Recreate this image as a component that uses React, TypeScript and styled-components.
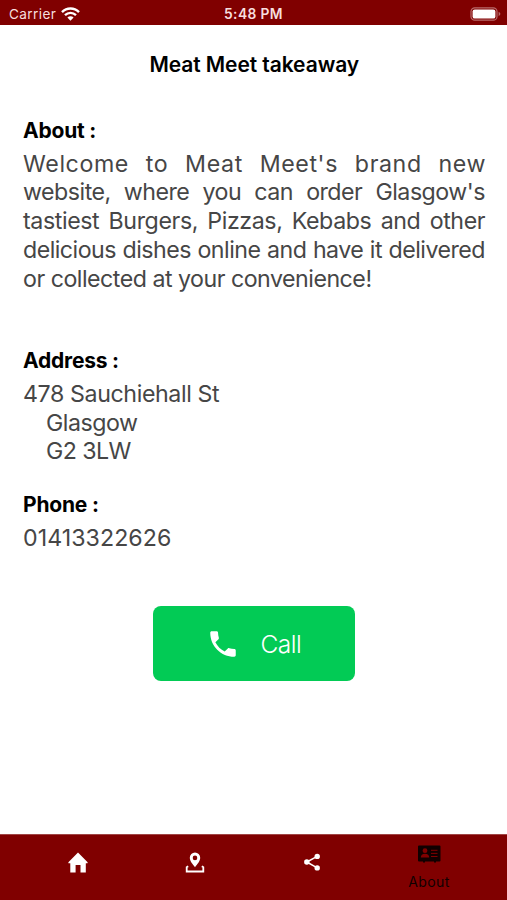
import React from "react";
import styled, { createGlobalStyle } from "styled-components";

const Global = createGlobalStyle`
  * { box-sizing: border-box; }
  body { margin: 0; background: #fff; }
`;

const Screen = styled.div`
  width: 507px;
  height: 900px;
  display: flex;
  flex-direction: column;
  overflow: hidden;
  background: #fff;
  font-family: Inter, "Liberation Sans", sans-serif;
`;

const StatusBar = styled.header`
  height: 25px;
  flex: none;
  display: grid;
  grid-template-columns: 1fr auto 1fr;
  align-items: center;
  padding: 2px 6px 0 9px;
  background: #800000;
  color: #f6dede;
  font-size: 13.6px;
  line-height: 16px;
`;

const Carrier = styled.div`
  display: flex;
  align-items: center;
  gap: 5px;
  letter-spacing: 0.4px;
`;

const Clock = styled.div`
  font-size: 13.8px;
  font-weight: 600;
  letter-spacing: 0.4px;
  margin-right: 3px;
`;

const BatterySlot = styled.div`
  display: flex;
  justify-content: flex-end;
`;

const Main = styled.main`
  flex: 1;
  display: flex;
  flex-direction: column;
  padding: 27px 21.5px 0 23px;
`;

const Title = styled.h1`
  margin: 0 0 39.6px;
  text-align: center;
  font-size: 21px;
  font-weight: 600;
  line-height: 26px;
  letter-spacing: -0.08px;
  white-space: nowrap;
  color: #000;
`;

const Section = styled.section<{ $after: number }>`
  margin-bottom: ${(p) => p.$after}px;
`;

const Heading = styled.h2`
  margin: 0 0 6.2px;
  font-size: 21px;
  font-weight: 700;
  line-height: 26px;
  letter-spacing: -0.2px;
  color: #000;
`;

const Line = styled.div<{ $spacing: number; $justify?: boolean; $indent?: number }>`
  font-size: 23.2px;
  line-height: 28.7px;
  white-space: nowrap;
  color: #464646;
  letter-spacing: ${(p) => p.$spacing}px;
  margin-right: ${(p) => -p.$spacing}px;
  padding-left: ${(p) => p.$indent ?? 0}px;
  text-align-last: ${(p) => (p.$justify ? "justify" : "left")};
`;

const CallButton = styled.button`
  align-self: center;
  width: 202px;
  height: 75px;
  display: flex;
  align-items: center;
  padding: 0 0 0 53px;
  gap: 21px;
  border: 0;
  border-radius: 8px;
  background: #02cb55;
  color: #fff;
  font-family: inherit;
  font-size: 24.5px;
  font-weight: 300;
  letter-spacing: -0.5px;
  margin-right: 1.5px;
`;

const TabBar = styled.nav`
  flex: none;
  height: 66px;
  display: grid;
  grid-template-columns: 117px 117px 117px 117px;
  justify-content: center;
  background: #800000;
  border-top: 1px solid #a04545;
`;

const Tab = styled.div<{ $active?: boolean }>`
  display: flex;
  flex-direction: column;
  align-items: center;
  padding-top: ${(p) => (p.$active ? 8 : 16)}px;
  gap: 8px;
  color: ${(p) => (p.$active ? "#100000" : "#fff")};
  font-size: 14px;
  line-height: 18px;
  letter-spacing: 0.4px;
`;

const about: [string, number][] = [
  ["Welcome to Meat Meet's brand new", 0.6],
  ["website, where you can order Glasgow's", -0.5],
  ["tastiest Burgers, Pizzas, Kebabs and other", -0.4],
  ["delicious dishes online and have it delivered", -0.52],
];

export default function App() {
  return (
    <Screen>
      <Global />
      <StatusBar>
        <Carrier>
          <span>Carrier</span>
          <svg width="19" height="14" viewBox="0 0 19 14" fill="none" stroke="#fff" strokeWidth="2.4">
            <path d="M1 5.1C5.8.2 13.2.2 18 5.1" />
            <path d="M4 8.2c3.2-3.1 7.8-3.1 11 0" />
            <path d="M6.4 10.6c1.8-1.7 4.4-1.7 6.2 0L9.5 13.7z" fill="#fff" stroke="none" />
          </svg>
        </Carrier>
        <Clock>5:48 PM</Clock>
        <BatterySlot>
          <svg width="31" height="14" viewBox="0 0 31 14">
            <rect x="1" y=".8" width="26" height="12.4" rx="3.8" fill="none" stroke="#b86b6b" strokeWidth="1.2" />
            <rect x="2.6" y="2.4" width="22.8" height="9.2" rx="2.2" fill="#fff" />
            <path d="M28.6 4.8q3.6 2.2 0 4.4z" fill="#b86b6b" />
          </svg>
        </BatterySlot>
      </StatusBar>
      <Main>
        <Title>Meat Meet takeaway</Title>
        <Section $after={54.5}>
          <Heading>About :</Heading>
          {about.map(([text, spacing]) => (
            <Line key={text} $spacing={spacing} $justify>{text}</Line>
          ))}
          <Line $spacing={-0.5}>or collected at your convenience!</Line>
        </Section>
        <Section $after={26.2}>
          <Heading>Address :</Heading>
          <Line $spacing={-0.39}>478 Sauchiehall St</Line>
          <Line $spacing={-0.5} $indent={23}>Glasgow</Line>
          <Line $spacing={-0.6} $indent={23}>G2 3LW</Line>
        </Section>
        <Section $after={53}>
          <Heading>Phone :</Heading>
          <Line $spacing={0.05}>01413322626</Line>
        </Section>
        <CallButton>
          <svg width="34" height="34" viewBox="0 0 24 24" fill="#fff">
            <path d="M6.62 10.79c1.44 2.83 3.76 5.14 6.59 6.59l2.2-2.2c.27-.27.67-.36 1.02-.24 1.12.37 2.33.57 3.57.57.55 0 1 .45 1 1V20c0 .55-.45 1-1 1-9.39 0-17-7.61-17-17 0-.55.45-1 1-1h3.5c.55 0 1 .45 1 1 0 1.25.2 2.45.57 3.57.11.35.03.74-.25 1.02l-2.2 2.2z" />
          </svg>
          <span>Call</span>
        </CallButton>
      </Main>
      <TabBar>
        <Tab>
          <svg width="22" height="22" viewBox="0 0 22 22" fill="#fff">
            <path d="M11 1.6 20.6 11.3v.9h-1.8v9.2h-5.3v-7.4H8.6v7.4H3.3v-9.2H1.4v-.9z" />
          </svg>
        </Tab>
        <Tab>
          <svg width="22" height="22" viewBox="0 0 22 22" fill="#fff">
            <path fillRule="evenodd" d="M11 1.6a5.2 5.2 0 0 1 5.2 5.2c0 3.5-3 6.4-5.2 9.4-2.2-3-5.2-5.9-5.2-9.4A5.2 5.2 0 0 1 11 1.6zm0 3a2.3 2.3 0 1 0 0 4.6 2.3 2.3 0 0 0 0-4.6z" />
            <path d="M4.2 15.3 2.7 16.2v4.3h16.6v-4.3l-1.5-.9" fill="none" stroke="#fff" strokeWidth="1.8" />
          </svg>
        </Tab>
        <Tab>
          <svg width="20" height="20" viewBox="0 0 20 20" fill="#fff">
            <path d="M15.2 5.4 4.8 11l10.4 5.9" fill="none" stroke="#fff" strokeWidth="1.6" />
            <circle cx="15.2" cy="5.4" r="2.7" />
            <circle cx="4.8" cy="11" r="2.7" />
            <circle cx="15.2" cy="16.9" r="2.7" />
          </svg>
        </Tab>
        <Tab $active>
          <svg width="24" height="22" viewBox="0 0 24 22">
            <path d="M2 2.5h20.5q1 0 1 1v14q0 1-1 1H19v1h-2v-1H8v1H6v-1H2q-1 0-1-1v-14q0-1 1-1z" fill="#100000" />
            <circle cx="8" cy="7.7" r="2.4" fill="#800000" />
            <path d="M3.8 14.5q0-3.8 4.2-3.8t4.2 3.8z" fill="#800000" />
            <path d="M14 7.3h6.5M14 10.4h6.5M14 13.5h6.5" stroke="#800000" strokeWidth="1" />
          </svg>
          <span>About</span>
        </Tab>
      </TabBar>
    </Screen>
  );
}
